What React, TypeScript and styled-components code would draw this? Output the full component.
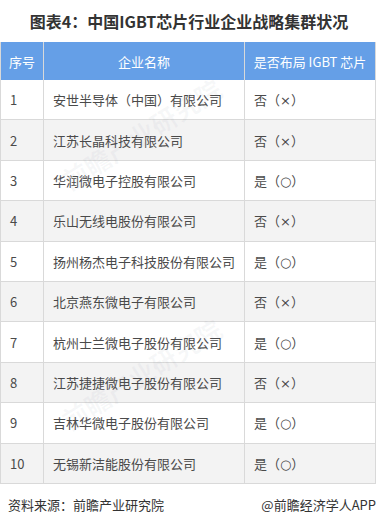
import React from "react";
import styled, { createGlobalStyle } from "styled-components";

const Global = createGlobalStyle`
  html, body { margin: 0; padding: 0; background: #ffffff; }
  body { font-family: "Noto Sans CJK SC", "Noto Sans", sans-serif; }
`;

const Page = styled.div`
  width: 378px;
  height: 527px;
  position: relative;
  overflow: hidden;
  background: #fff;
`;

const Title = styled.h1`
  margin: 0;
  height: 42px;
  display: flex;
  align-items: center;
  justify-content: center;
  font-size: 16px;
  font-weight: 700;
  color: #333;
  padding-bottom: 1px;
  box-sizing: border-box;
`;

const Table = styled.div`
  display: grid;
  grid-template-columns: 43px 201px 131px;
  width: 376px;
  border-left: 1px solid #d9d9d9;
  box-sizing: border-box;
`;

const HeadCell = styled.div`
  height: 38px;
  background: #659fe7;
  color: #fff;
  font-size: 13px;
  display: flex;
  align-items: center;
  justify-content: center;
  border-right: 1px solid #d9d9d9;
  box-sizing: border-box;
`;

const Cell = styled.div<{ $alt: boolean; $mark?: boolean }>`
  height: 40.4px;
  background: ${(p) => (p.$alt ? "#f3f3f3" : "#ffffff")};
  color: #4a4a4a;
  font-size: 13px;
  font-family: ${(p) =>
    p.$mark ? `"DejaVu Sans", "Noto Sans CJK SC", sans-serif` : "inherit"};
  display: flex;
  align-items: center;
  padding-left: 9px;
  border-right: 1px solid #d9d9d9;
  border-bottom: 1px solid #d9d9d9;
  box-sizing: border-box;
  white-space: nowrap;
`;

const Footer = styled.div`
  display: flex;
  justify-content: space-between;
  align-items: center;
  padding: 11px 2px 0 8px;
  font-size: 13px;
  color: #333;
`;

const Watermark = styled.div<{ $x: number; $y: number }>`
  position: absolute;
  left: ${(p) => p.$x}px;
  top: ${(p) => p.$y}px;
  transform: rotate(-32deg);
  font-size: 26px;
  font-weight: 700;
  color: rgba(120, 130, 150, 0.06);
  pointer-events: none;
  white-space: nowrap;
`;

const rows: [string, string, string][] = [
  ["1", "安世半导体（中国）有限公司", "否（×）"],
  ["2", "江苏长晶科技有限公司", "否（×）"],
  ["3", "华润微电子控股有限公司", "是（○）"],
  ["4", "乐山无线电股份有限公司", "否（×）"],
  ["5", "扬州杨杰电子科技股份有限公司", "是（○）"],
  ["6", "北京燕东微电子有限公司", "否（×）"],
  ["7", "杭州士兰微电子股份有限公司", "是（○）"],
  ["8", "江苏捷捷微电子股份有限公司", "否（×）"],
  ["9", "吉林华微电子股份有限公司", "是（○）"],
  ["10", "无锡新洁能股份有限公司", "是（○）"],
];

export default function App() {
  return (
    <Page>
      <Global />
      <Title>图表4：中国IGBT芯片行业企业战略集群状况</Title>
      <Table>
        <HeadCell>序号</HeadCell>
        <HeadCell>企业名称</HeadCell>
        <HeadCell>是否布局 IGBT 芯片</HeadCell>
        {rows.map((r, i) => (
          <React.Fragment key={r[0]}>
            <Cell $alt={i % 2 === 1}>{r[0]}</Cell>
            <Cell $alt={i % 2 === 1}>{r[1]}</Cell>
            <Cell $alt={i % 2 === 1} $mark>{r[2]}</Cell>
          </React.Fragment>
        ))}
      </Table>
      <Footer>
        <span>资料来源：前瞻产业研究院</span>
        <span>@前瞻经济学人APP</span>
      </Footer>
      <Watermark $x={50} $y={115}>前瞻产业研究院</Watermark>
      <Watermark $x={50} $y={355}>前瞻产业研究院</Watermark>
    </Page>
  );
}
